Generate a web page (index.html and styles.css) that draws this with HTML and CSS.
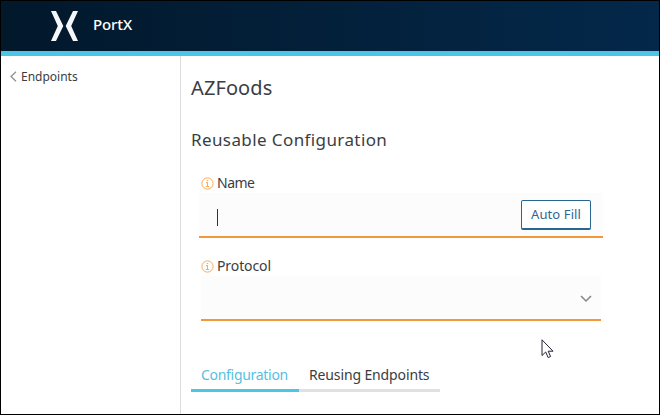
FILE: index.html
```html
<!DOCTYPE html>
<html lang="en">
<head>
<meta charset="utf-8">
<title>PortX</title>
<link rel="stylesheet" href="styles.css">
</head>
<body>
<div class="app">
  <header class="topbar">
    <svg class="logo" width="28" height="30" viewBox="0 0 28 30"><path d="M0 0H5L12.300 15L5 30H0L6.800 15ZM27 0H22L14.700 15L22 30H27L20.200 15Z" fill="#f5f7fa"/></svg>
    <span class="brand">PortX</span>
  </header>
  <div class="body">
    <nav class="sidebar">
      <a class="back"><svg width="7" height="11" viewBox="0 0 7 11"><path d="M6 .8L1 5.500L6 10.200" fill="none" stroke="#909090" stroke-width="1.300"/></svg><span class="back-text">Endpoints</span></a>
    </nav>
    <main class="content">
      <h1 class="title">AZFoods</h1>
      <h2 class="subtitle">Reusable Configuration</h2>
      <div class="field">
        <label class="label"><svg class="info" width="13" height="13" viewBox="0 0 13 13"><circle cx="6.500" cy="6.500" r="5.600" fill="none" stroke="#f8a95c"/><path d="M5 5.500H6.500V9.500M4.800 9.500H8.200M5.800 3.500H7.200" fill="none" stroke="#f8a95c" stroke-width="1.100"/></svg><span class="label-text name">Name</span></label>
        <div class="input"><span class="caret"></span><button class="autofill"><span>Auto Fill</span></button></div>
      </div>
      <div class="field">
        <label class="label"><svg class="info" width="13" height="13" viewBox="0 0 13 13"><circle cx="6.500" cy="6.500" r="5.600" fill="none" stroke="#f8a95c"/><path d="M5 5.500H6.500V9.500M4.800 9.500H8.200M5.800 3.500H7.200" fill="none" stroke="#f8a95c" stroke-width="1.100"/></svg><span class="label-text protocol">Protocol</span></label>
        <div class="input select"><svg width="12" height="8" viewBox="0 0 12 8"><path d="M1 1L6 6L11 1" fill="none" stroke="#858585" stroke-width="1.500"/></svg></div>
      </div>
      <div class="tabs">
        <a class="tab active"><span>Configuration</span></a>
        <a class="tab reusing"><span>Reusing Endpoints</span></a>
      </div>
    </main>
  </div>
  <svg class="pointer" width="13" height="20" viewBox="0 0 13 20"><path d="M1 .8V16.500L4.700 13L7.200 18.600L9.600 17.500L7.200 12.200H12Z" fill="#fff" stroke="#222231"/></svg>
</div>
</body>
</html>
```
FILE: styles.css
```css
* { box-sizing: border-box; }
body { margin: 0; font-family: "Noto Sans", "Open Sans", sans-serif; color: #3a3d42; background: #fff; }
.app { position: relative; width: 660px; height: 415px; border: 1px solid #000; display: flex; flex-direction: column; overflow: hidden; }
.topbar { height: 55px; flex: none; border-bottom: 5px solid #4dc5e7; background: linear-gradient(90deg, #02182b, #04284a); display: flex; align-items: flex-start; padding: 10px 0 0 50px; }
.logo { flex: none; }
.brand { margin-left: 14px; margin-top: 3px; font-size: 15px; font-weight: 500; line-height: 20px; color: #fff; letter-spacing: -.1px; }
.body { flex: 1; display: flex; }
.sidebar { width: 180px; border-right: 1px solid #dcdcdc; padding: 11px 0 0 9px; }
.back { display: flex; align-items: center; height: 18px; font-size: 12px; white-space: nowrap; }
.back svg { margin-top: 1px; }
.back-text { margin-left: 4px; }
.content { flex: 1; padding: 18px 0 0 10px; }
.title { margin: 0; font-weight: 400; font-size: 20px; line-height: 28px; letter-spacing: .1px; white-space: nowrap; }
.subtitle { margin: 24px 0 20px; font-weight: 400; font-size: 17px; line-height: 28px; letter-spacing: .4px; white-space: nowrap; }
.field { width: 404px; margin-left: 8px; height: 83px; }
.label { display: flex; align-items: center; height: 19px; padding: 0 0 2px 2px; }
.info { flex: none; margin-top: 1px; }
.label-text { margin-left: 3px; font-size: 14px; line-height: 17px; white-space: nowrap; }
.name { letter-spacing: -.5px; }
.protocol { letter-spacing: -.1px; }
.input { height: 45px; background: #fcfcfc; border-bottom: 2px solid #f0983a; display: flex; align-items: center; justify-content: space-between; padding: 0 12px 0 18px; }
.caret { width: 1px; height: 17px; margin-top: 5px; background: #333; }
.autofill { width: 70px; height: 30px; padding: 0; background: #fff; border: 1px solid #266691; border-bottom-width: 2px; border-radius: 2px; color: #306792; font: 13px "Noto Sans", sans-serif; white-space: nowrap; letter-spacing: .1px; }
.select { margin: 0 2px; justify-content: flex-end; padding: 2px 9px 0 0; }
.tabs { display: flex; width: 249px; height: 36px; margin-top: 16px; }
.tab { width: 108px; border-bottom: 3px solid #4dc5e7; color: #56c0e2; font-size: 14px; line-height: 38px; letter-spacing: -.3px; padding-left: 10px; white-space: nowrap; }
.reusing { width: 141px; border-color: #e0e0e0; color: #3a3d42; letter-spacing: -.13px; }
.pointer { position: absolute; left: 540px; top: 338px; }
```
